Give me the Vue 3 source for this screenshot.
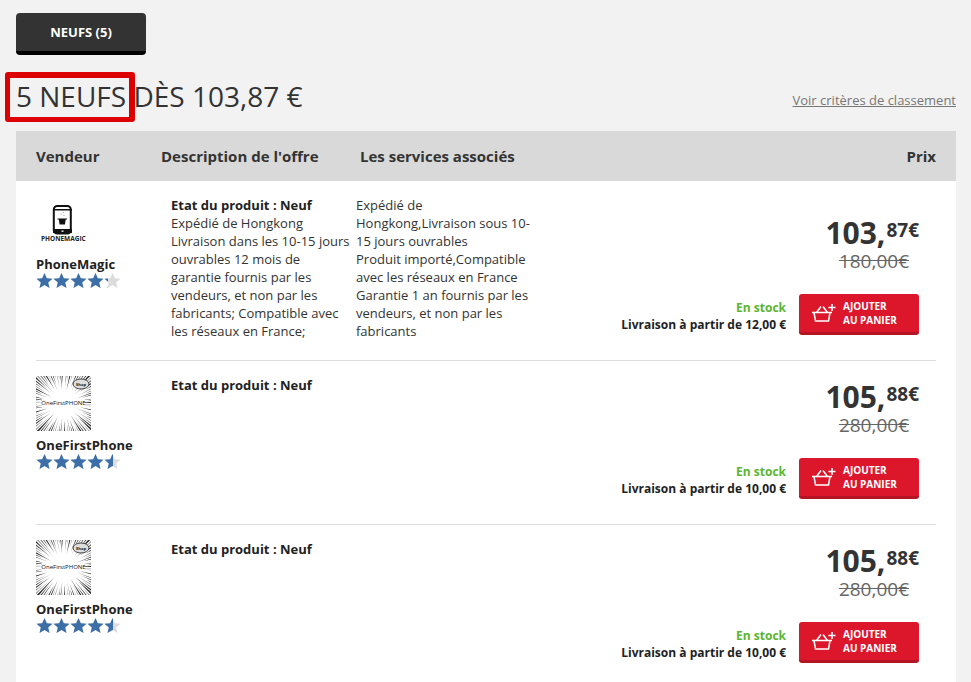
<script setup>
const offers = [
  { seller: 'PhoneMagic', logo: 'magic', rating: 85, whole: '103,', cents: '87€', old: '180,00€', ship: '12,00',
    desc: ['Expédié de Hongkong', 'Livraison dans les 10-15 jours ouvrables 12 mois de garantie fournis par les vendeurs, et non par les fabricants; Compatible avec les réseaux en France;'],
    serv: ['Expédié de Hongkong,Livraison sous 10-15 jours ouvrables', 'Produit importé,Compatible avec les réseaux en France', 'Garantie 1 an fournis par les vendeurs, et non par les fabricants'] },
  { seller: 'OneFirstPhone', logo: 'burst', rating: 90, whole: '105,', cents: '88€', old: '280,00€', ship: '10,00', desc: [], serv: [] },
  { seller: 'OneFirstPhone', logo: 'burst', rating: 90, whole: '105,', cents: '88€', old: '280,00€', ship: '10,00', desc: [], serv: [] },
]
const rays = Array.from({ length: 96 }, (_, i) => {
  const a = (i / 96) * Math.PI * 2 + 0.03
  const r = 14 + ((i * 7) % 5) * 3
  const w = 0.008 + ((i * 5) % 4) * 0.005
  const px = (ang, rad) => `${(27.5 + Math.cos(ang) * rad).toFixed(1)},${(27.5 + Math.sin(ang) * rad).toFixed(1)}`
  return `${px(a, r)} ${px(a - w, 44)} ${px(a + w, 44)}`
})
const starPath = 'M8 0l2.300 5.200 5.700.6-4.300 3.700 1.300 5.500L8 12.100 3 15l1.300-5.500L0 5.800l5.700-.6z'
</script>

<template>
  <div class="page">
    <div class="tabs"><button class="tab">NEUFS (5)</button></div>
    <div class="heading">
      <h1 class="title"><span class="mark">5 NEUFS</span> DÈS 103,87 €</h1>
      <a class="criteria">Voir critères de classement</a>
    </div>
    <div class="head">
      <span class="h-seller">Vendeur</span>
      <span class="h-desc">Description de l'offre</span>
      <span class="h-serv">Les services associés</span>
      <span class="h-price">Prix</span>
    </div>
    <div class="list">
      <div v-for="(o, i) in offers" :key="i" class="row">
        <div class="seller">
          <div class="logo">
            <svg v-if="o.logo === 'magic'" width="55" height="55" viewBox="0 0 55 55">
              <rect x="17.800" y="10" width="17" height="27.500" rx="3.500" fill="#fff" stroke="#111" stroke-width="2" />
              <rect x="17" y="13" width="19" height="1.500" fill="#111" />
              <rect x="17" y="33" width="19" height="4" fill="#111" />
              <path d="M21.500 22.500h9.500v1h-1.300l-.8 5h-5.300l-.8-5h-1.300z" fill="#111" />
              <circle cx="25" cy="18" r=".6" fill="#999" />
              <circle cx="27.500" cy="16.500" r=".6" fill="#aaa" />
              <circle cx="28" cy="19.500" r=".6" fill="#999" />
              <rect x="25.500" y="34.500" width="2" height="1.300" fill="#fff" />
              <text x="27.300" y="45" text-anchor="middle" class="magic-text">PHONEMAGIC</text>
            </svg>
            <svg v-else width="55" height="55" viewBox="0 0 55 55">
              <defs>
                <clipPath id="burst-clip"><rect width="55" height="55" /></clipPath>
              </defs>
              <rect width="55" height="55" fill="#fff" />
              <g clip-path="url(#burst-clip)">
                <polygon v-for="(r, k) in rays" :key="k" :points="r" fill="#222" />
              </g>
              <rect x="6" y="23" width="43" height="8" fill="#fff" opacity=".8" />
              <ellipse cx="45" cy="8" rx="8" ry="5" fill="#ddd" stroke="#222" stroke-width=".8" />
              <text x="45" y="9.500" text-anchor="middle" class="bubble-text">Shop</text>
              <text x="27.500" y="29" text-anchor="middle" class="burst-text">OneFirstPHONE</text>
            </svg>
          </div>
          <div class="name">{{ o.seller }}</div>
          <div class="stars">
            <div class="stars-row grey">
              <svg v-for="n in 5" :key="n" width="17" height="15" viewBox="0 0 16 15"><path :d="starPath" /></svg>
            </div>
            <div class="stars-row blue" :style="{ width: o.rating + '%' }">
              <svg v-for="n in 5" :key="n" width="17" height="15" viewBox="0 0 16 15"><path :d="starPath" /></svg>
            </div>
          </div>
        </div>
        <div class="desc">
          <div class="state">Etat du produit : Neuf</div>
          <div v-for="(d, k) in o.desc" :key="k">{{ d }}</div>
        </div>
        <div class="serv">
          <div v-for="(s, k) in o.serv" :key="k">{{ s }}</div>
        </div>
        <div class="buy">
          <div class="price">
            <span class="whole">{{ o.whole }}</span><span class="cents">{{ o.cents }}</span>
          </div>
          <div class="old">{{ o.old }}</div>
          <div class="action">
            <div class="stock">
              <div class="green">En stock</div>
              <div class="ship">Livraison à partir de {{ o.ship }} €</div>
            </div>
            <button class="cart">
              <svg width="24" height="20" viewBox="0 0 24 20" fill="none" stroke="#fff" stroke-width="1.500">
                <path d="M0 9.500h20M2 9.500l1.500 8.500h13L18 9.500M4.500 9.500l4.500-6M15.500 9.500l-4.500-6" />
                <path d="M16.500 4.500h7M20 1v7" stroke-width="1.600" />
              </svg>
              <span class="cart-label">AJOUTER<br />AU PANIER</span>
            </button>
          </div>
        </div>
      </div>
    </div>
  </div>
</template>

<style>
html, body { margin: 0; background: #f2f2f2; }
</style>

<style scoped>
.page {
  width: 971px;
  height: 682px;
  overflow: hidden;
  background: #f2f2f2;
  font-family: "Open Sans", sans-serif;
  color: #333;
  box-sizing: border-box;
  padding: 13px 15px 0 16px;
}
.tabs { height: 42px; }
.tab {
  width: 130px;
  height: 42px;
  border: 0;
  border-bottom: 4px solid #000;
  border-radius: 4px;
  background: #333;
  color: #fff;
  font: 700 13px "Open Sans", sans-serif;
}
.heading {
  display: flex;
  justify-content: space-between;
  align-items: flex-end;
  height: 76px;
}
.title {
  margin: 0 0 17px;
  font-size: 28px;
  line-height: 36px;
  font-weight: 400;
  color: #333;
}
.mark { position: relative; }
.mark::after {
  content: "";
  position: absolute;
  left: -11px;
  top: -5px;
  width: 119px;
  height: 39px;
  border-style: solid;
  border-color: #dd0000;
  border-width: 6px 6px 5px 5px;
  border-radius: 3px;
}
.criteria {
  font-size: 13px;
  line-height: 18px;
  color: #777;
  text-decoration: underline;
  margin-bottom: 22px;
}
.head {
  height: 50px;
  background: #d9d9d9;
  display: flex;
  align-items: center;
  padding: 0 20px;
  font-size: 15px;
  font-weight: 700;
}
.h-seller { width: 125px; }
.h-desc { width: 199px; }
.h-serv { flex: 1; }
.list { background: #fff; padding: 0 20px; height: 600px; }
.row {
  display: flex;
  border-bottom: 1px solid #ddd;
  height: 163px;
  font-size: 13px;
  line-height: 18px;
  color: #333;
}
.row:first-child { height: 179px; }
.seller { width: 135px; padding-top: 15px; }
.logo { height: 55px; }
.row:first-child .logo { height: 54px; }
.logo svg { display: block; }
.name { font-weight: 700; color: #222; margin-top: 6px; line-height: 17px; }
.stars { position: relative; width: 85px; height: 15px; }
.stars-row { position: absolute; left: 0; top: 0; display: flex; overflow: hidden; width: 85px; }
.stars-row svg { flex: none; }
.grey path { fill: #dcdcdc; }
.blue path { fill: #3c6ea8; }
.desc { width: 180px; margin-right: 5px; padding-top: 15px; }
.state { font-weight: 700; color: #222; }
.serv { width: 178px; padding-top: 15px; }
.buy { flex: 1; display: flex; flex-direction: column; align-items: flex-end; padding-top: 18px; padding-right: 17px; }
.row:first-child .buy { padding-top: 34px; }
.price { height: 36px; display: flex; align-items: flex-start; color: #333; font-weight: 700; }
.whole { font-size: 30px; line-height: 36px; }
.cents { font-size: 19px; line-height: 26px; margin: 2px 0 0 1px; }
.old {
  font-size: 19px;
  line-height: 20px;
  color: #666;
  text-decoration: line-through;
  margin-right: 10px;
}
.action {
  display: flex;
  align-items: flex-start;
  margin-top: auto;
  margin-bottom: 25px;
}
.stock {
  text-align: right;
  font-size: 12px;
  font-weight: 700;
  line-height: 18px;
  padding-top: 5px;
  margin-right: 13px;
  color: #222;
}
.green { color: #5cb531; line-height: 17px; }
.cart {
  width: 120px;
  height: 41px;
  border: 0;
  border-bottom: 3px solid #b31525;
  border-radius: 3px;
  background: #dc172b;
  color: #fff;
  display: flex;
  align-items: center;
  padding: 0 0 0 13px;
  font: 700 10px/14px "Open Sans", sans-serif;
  text-align: left;
}
.cart svg { flex: none; margin-right: 7px; }
.magic-text { font: 700 6.500px "Open Sans", sans-serif; fill: #222; }
.burst-text { font: 400 6px "Open Sans", sans-serif; fill: #111; }
.bubble-text { font: 700 4px "Open Sans", sans-serif; fill: #111; }
</style>
